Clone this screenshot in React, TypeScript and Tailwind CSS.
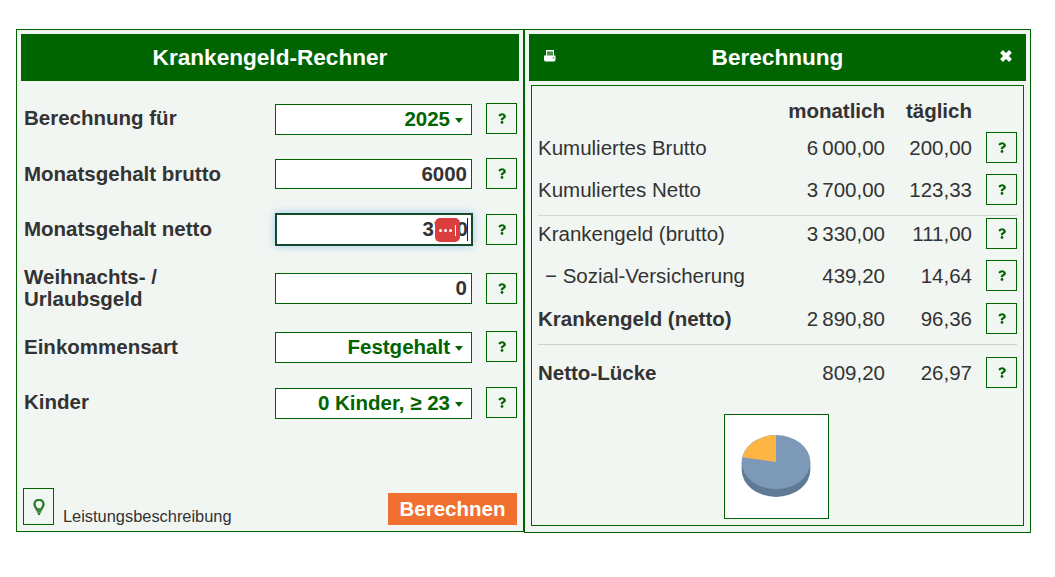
import React from "react";
import { FaQuestion } from "react-icons/fa";

function HelpBtn({ className = "" }: { className?: string }) {
  return (
    <button className={`flex h-[31px] w-[31px] shrink-0 items-center justify-center border border-[#006400] bg-[#f2f6f2] text-[#006400] ${className}`}>
      <FaQuestion className="h-[11px] w-[8px]" />
    </button>
  );
}

function Caret() {
  return <span className="ml-[5px] mt-[2px] h-0 w-0 border-x-[4px] border-t-[5px] border-x-transparent border-t-[#006400]" />;
}

function SelectBox({ value }: { value: string }) {
  return (
    <div className="flex h-[31px] w-[197px] items-center justify-end border border-[#006400] bg-white pr-[8px] text-[20.5px] font-bold text-[#006400]">
      {value}
      <Caret />
    </div>
  );
}

function InputBox({ value, className = "h-[31px]" }: { value: string; className?: string }) {
  return (
    <div className={`flex w-[197px] items-center justify-end border border-[#006400] bg-white pr-[4px] text-[20.5px] font-bold ${className}`}>
      {value}
    </div>
  );
}

function FocusedInput({ value }: { value: string }) {
  return (
    <div className="relative flex h-[33px] w-[198px] items-center justify-end border-2 border-[#14492a] bg-white pr-[3px] text-[20.5px] font-bold shadow-[0_0_8px_rgba(102,175,233,0.6)]">
      {value}
      <span className="absolute right-[3px] top-[3px] h-[23px] w-px bg-[#222]" />
      {/* password manager badge over the field */}
      <div className="absolute left-[158px] top-[3px] flex h-[24px] w-[25px] items-center justify-center gap-[2px] rounded-[5px] bg-[#da3f3d]">
        <span className="h-[3px] w-[3px] rounded-full bg-white" />
        <span className="h-[3px] w-[3px] rounded-full bg-white" />
        <span className="h-[3px] w-[3px] rounded-full bg-white" />
        <span className="ml-[1px] h-[11px] w-px bg-white" />
      </div>
    </div>
  );
}

function FormRow({ label, children, className = "", labelClass = "", center = false, pad = true }: { label: React.ReactNode; children: React.ReactNode; className?: string; labelClass?: string; center?: boolean; pad?: boolean }) {
  return (
    <div className={`flex pl-[7px] pr-[6px] ${center ? "items-center" : "items-start"} ${className}`}>
      <div className={`w-[251px] self-center text-[20.5px] font-bold leading-[22px] ${labelClass}`}>{label}</div>
      <div className={`flex w-[211px] shrink-0 ${pad ? "pt-[1px]" : ""}`}>{children}</div>
      <HelpBtn />
    </div>
  );
}

function ResultRow({ label, month, day, bold = false, className = "" }: { label: React.ReactNode; month: string; day: string; bold?: boolean; className?: string }) {
  return (
    <div className={`flex h-[31px] items-center text-[20.5px] ${className}`}>
      <div className={`flex-1 pt-[2px] ${bold ? "font-bold" : ""}`}>{label}</div>
      <div className="w-[100px] pt-[2px] text-right">{month}</div>
      <div className="w-[87px] pt-[2px] text-right">{day}</div>
      <HelpBtn className="ml-[14px]" />
    </div>
  );
}

export default function App() {
  return (
    <div className="min-h-[577px] bg-white pl-[16px] pt-[29px] font-['Liberation_Sans',Arial,sans-serif] text-[#333]">
      <div className="flex items-start">
        {/* left: form */}
        <div className="flex h-[503px] w-[508px] flex-col border border-[#006400] bg-[#f2f6f2] p-[4px]">
          <div className="flex h-[47px] items-center justify-center bg-[#006400] text-[22.6px] font-bold text-white">Krankengeld-Rechner</div>
          <div className="-mx-[4px] flex flex-1 flex-col pt-[22px]">
            <FormRow label="Berechnung für" labelClass="pb-[2px]">
              <SelectBox value="2025" />
            </FormRow>
            <FormRow label="Monatsgehalt brutto" className="mt-[23px]">
              <InputBox value="6000" className="h-[30px]" />
            </FormRow>
            <FormRow label="Monatsgehalt netto" className="mt-[24px]" labelClass="pb-[2px]" center pad={false}>
              <FocusedInput value="3700" />
            </FormRow>
            <FormRow label={<>Weihnachts- /<br />Urlaubsgeld</>} className="mt-[20px]" center pad={false}>
              <InputBox value="0" />
            </FormRow>
            <FormRow label="Einkommensart" className="mt-[21px]">
              <SelectBox value="Festgehalt" />
            </FormRow>
            <FormRow label="Kinder" className="mt-[24px]" labelClass="pb-[2px]">
              <SelectBox value="0 Kinder, ≥ 23" />
            </FormRow>
            <div className="mt-auto flex items-end pb-[2px] pl-[6px] pr-[6px]">
              <button className="flex h-[37px] w-[31px] items-center justify-center border border-[#006400]">
                <svg viewBox="0 0 12 16" className="h-[16px] w-[12px]" fill="none" stroke="#2e7d32" strokeWidth="2.400">
                  <path d="M3.800 10.500C3.500 8.800 1.500 7.800 1.500 5.300a4.500 4.500 0 0 1 9 0c0 2.500-2 3.500-2.300 5.200z" />
                  <path d="M3.800 12.700h4.400M4.800 14.900h2.400" strokeWidth="2" />
                </svg>
              </button>
              <span className="ml-[9px] text-[16.4px] leading-[18px]">Leistungsbeschreibung</span>
              <button className="ml-auto h-[32px] w-[129px] bg-[#f07030] text-[20.5px] font-bold text-white">Berechnen</button>
            </div>
          </div>
        </div>

        {/* right: result */}
        <div className="flex h-[504px] w-[507px] flex-col border border-[#006400] bg-[#f2f6f2] p-[4px]">
          <div className="flex h-[47px] items-center justify-between bg-[#006400] pl-[15px] pr-[13px] text-white">
            <svg viewBox="0 0 12 12" className="mb-[3px] h-[12px] w-[12px]">
              <path d="M2 0h8v6H9V1.500H3V6H2z" fill="#fff" />
              <path d="M3 1.500h6V6H3z" fill="#fff" opacity="0.3" />
              <path d="M0 5.500h11.500v4.500l-1 1.500H1l-1-1.500z" fill="#fff" />
              <rect x="8.800" y="7" width="1.400" height="1.400" fill="#5a9a5a" />
            </svg>
            <span className="text-[22.6px] font-bold">Berechnung</span>
            <svg viewBox="0 0 14 14" className="mb-[3px] h-[14px] w-[14px]" fill="none" stroke="#fff" strokeWidth="4">
              <path d="M2.500 2.500l9 9M11.500 2.500l-9 9" />
            </svg>
          </div>
          <div className="mx-[2px] mb-[2px] mt-[4px] flex flex-1 flex-col border border-[#006400] px-[6px]">
            <div className="mt-[14px] flex h-[23px] items-center text-[20.5px] font-bold">
              <div className="flex-1" />
              <div className="w-[100px] whitespace-nowrap text-right">monatlich</div>
              <div className="w-[87px] text-right">täglich</div>
              <div className="ml-[14px] w-[31px]" />
            </div>
            <ResultRow className="mt-[9px]" label="Kumuliertes Brutto" month={"6\u2009000,00"} day="200,00" />
            <ResultRow className="mt-[11px]" label="Kumuliertes Netto" month={"3\u2009700,00"} day="123,33" />
            <div className="mt-[10px] border-t border-[#cfd8cf]" />
            <ResultRow className="mt-[2px]" label="Krankengeld (brutto)" month={"3\u2009330,00"} day="111,00" />
            <ResultRow className="mt-[11px]" label={<span className="pl-[7px]">− Sozial-Versicherung</span>} month="439,20" day="14,64" />
            <ResultRow className="mt-[12px]" label="Krankengeld (netto)" month={"2\u2009890,80"} day="96,36" bold />
            <div className="mt-[10px] border-t border-[#c5d8c5]" />
            <ResultRow className="mt-[12px]" label="Netto-Lücke" month="809,20" day="26,97" bold />
            <div className="mt-[26px] flex justify-center pr-[2px]">
              <div className="flex h-[105px] w-[105px] items-center justify-center border border-[#006400] bg-white">
                <svg viewBox="0 0 105 105" className="h-[103px] w-[103px]">
                  <path d="M17 48v8a35 27.500 0 0 0 70 0v-8z" fill="#5f7a94" />
                  <ellipse cx="52" cy="48" rx="35" ry="27.500" fill="#7c9ab8" />
                  <path d="M52 48V20.500A35 27.500 0 0 0 18 43z" fill="#fdb643" />
                </svg>
              </div>
            </div>
          </div>
        </div>
      </div>
    </div>
  );
}
